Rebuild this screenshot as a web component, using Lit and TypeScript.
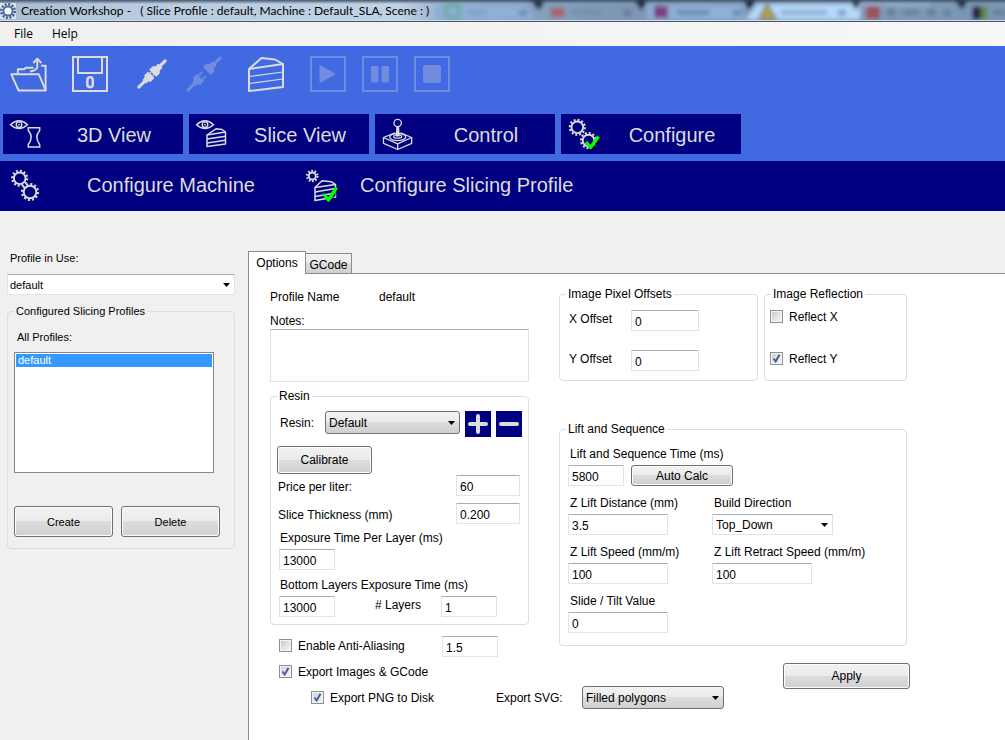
import { LitElement, html, css, svg } from "lit";
import { customElement, state } from "lit/decorators.js";

const INK = "#dcdcdc";

/** A toothed ring centred on (x, y) with outer radius r. */
const gear = (x: number, y: number, r: number, teeth = 12) => {
  const mid = r - 1;
  const dash = (2 * Math.PI * mid) / (teeth * 2);
  return svg`
    <circle cx=${x} cy=${y} r=${r - 2.7} fill="none" stroke=${INK} stroke-width="1.9" />
    <circle cx=${x} cy=${y} r=${mid} fill="none" stroke=${INK} stroke-width="2.2"
      stroke-dasharray="${dash} ${dash}" />`;
};

const eye = svg`
  <path d="M7.5 10.7Q16 3 24.5 10.7Q16 18.2 7.5 10.7Z" fill="none" stroke=${INK} stroke-width="1.4" />
  <circle cx="16" cy="10.7" r="2.8" fill="none" stroke=${INK} stroke-width="1.4" />
  <circle cx="16" cy="10.7" r="0.9" fill=${INK} />`;

const tick = (points: string) => svg`
  <polyline points=${points} transform="translate(1.5 1.5)" fill="none" stroke="#000" stroke-opacity=".5" stroke-width="3" />
  <polyline points=${points} fill="none" stroke="#00ff00" stroke-width="3.4" stroke-linejoin="round" />`;

const icons = {
  open: svg`<g fill="none" stroke=${INK} stroke-width="1.9" stroke-linejoin="round">
    <path d="M1.3 18.3H28.8L35.8 34.5H8.6Z" />
    <path d="M7.8 17.5V13.3H14L15.5 11.8H23.500" />
    <path d="M31 9.7H35.6V34" />
    <path d="M27.3 3V11Q26.5 14.5 20 15.5" />
    <path d="M23.3 7L27.3 2.6L31.3 7" />
  </g>`,
  save: svg`<g fill="none" stroke=${INK} stroke-width="2">
    <path d="M1 1H35V35H1Z" />
    <path d="M6 1V17H30V1" />
    <rect x="15.4" y="21.2" width="5.400" height="10" rx="2.600" stroke-width="2.500" />
  </g>`,
  connect: svg`<g transform="translate(18 18) rotate(-45)" fill=${INK}>
    <rect x="-20" y="-1.5" width="40" height="3" rx="1" />
    <path d="M-11 -2.5L-7 -3V-4.5H-1V4.5H-7V3L-11 2.5Z" />
    <path d="M1 -5H6L8 -3H12V3H8L6 5H1Z" />
    <rect x="-.8" y="-3.6" width="1.6" height="7.2" fill="#4169e1" />
    <rect x="-1" y="-2.6" width="2" height="1.2" /><rect x="-1" y="1.4" width="2" height="1.2" />
  </g>`,
  disconnect: svg`<g transform="translate(18 18) rotate(-45)" fill=${INK}>
    <rect x="-24" y="-1.5" width="14" height="3" rx="1" />
    <path d="M-14 -2.5L-11 -3V-5H-5V5H-11V3L-14 2.5Z" />
    <rect x="-5" y="-3.6" width="5" height="1.6" /><rect x="-5" y="2" width="5" height="1.6" />
    <path d="M4 -5.5H9L11 -3H15V3H11L9 5.5H4Z" />
    <rect x="14" y="-1.5" width="10" height="3" rx="1" />
  </g>`,
  slice: svg`<g fill="none" stroke=${INK} stroke-linejoin="round">
    <path d="M1 13L35 8V31L1 35Z" stroke-width="2" />
    <path d="M1 13L13.5 2L27 3.5L35 8" stroke-width="2" />
    <path d="M1 20.5L35 16M1 27.5L35 23" stroke-width="1.1" />
  </g>`,
  play: svg`<rect x="1" y="1" width="34" height="34" fill="none" stroke=${INK} stroke-width="2" />
    <path d="M9.5 10.5Q9.5 9 11 9.5L24.5 17Q26 18 24.5 19L11 26.5Q9.5 27 9.5 25.5Z" fill=${INK} />`,
  pause: svg`<rect x="1" y="1" width="34" height="34" fill="none" stroke=${INK} stroke-width="2" />
    <rect x="9" y="10" width="7.5" height="16.5" rx="1" fill=${INK} /><rect x="19.5" y="10" width="7.5" height="16.5" rx="1" fill=${INK} />`,
  stop: svg`<rect x="1" y="1" width="34" height="34" fill="none" stroke=${INK} stroke-width="2" />
    <rect x="9" y="9" width="18" height="18" rx="2.5" fill=${INK} />`,
  view3d: svg`${eye}
    <path d="M25.3 13.7H36.7V16.5Q31 23 36.7 30.5V33H25.3V30.5Q31 23 25.3 16.5Z" fill="none" stroke=${INK} stroke-width="1.5" />`,
  viewSlice: svg`${eye}
    <g fill="none" stroke=${INK} stroke-width="1.5" stroke-linejoin="round">
      <path d="M18 21L36.5 18V30L18 32.5Z" /><path d="M18 21L27 14.8L33 15.500L36.5 18" />
      <path d="M18 25L36.5 22.3M18 29L36.5 26.2" />
    </g>`,
  joystick: svg`<g fill="none" stroke=${INK} stroke-width="1.3" stroke-linejoin="round">
      <circle cx="22.7" cy="9" r="3.7" />
      <path d="M20 18.8L8.5 23.5L22.7 29.8L36.7 23.5L25.5 18.8" />
      <path d="M8.5 23.5V29.3L22.7 35.5L36.7 29.3V23.5M22.7 29.8V35.5" />
      <ellipse cx="22.7" cy="23" rx="8" ry="3.6" /><ellipse cx="22.7" cy="22.5" rx="4" ry="1.7" />
    </g>
    <path d="M21.3 13H24.1L24.7 22.5H20.7Z" fill=${INK} />`,
  configure: svg`${gear(16.3, 13.3, 8.5)}${gear(27.5, 26.5, 8.5)}${tick("25,28 29.5,33.5 37.5,22.5")}`,
  machine: svg`${gear(16.7, 12.3, 8.5)}${gear(27, 26, 9)}`,
  profile: svg`${gear(11.3, 10, 6.2, 10)}
    <g fill="none" stroke=${INK} stroke-width="1.5" stroke-linejoin="round">
      <path d="M14 21.500L34.5 18.5V31L14 34.5Z" /><path d="M14 21.500L21 14.8L30.500 15.800L34.5 18.5" />
      <path d="M14 26L34.5 22.5M14 30.5L34.5 27" />
    </g>${tick("22.5,28 27.5,34 35.5,21.5")}`,
};

@customElement("app-root")
export class AppRoot extends LitElement {
  @state() private tab = "Options";

  static styles = css`
    :host {
      display: flex;
      flex-direction: column;
      min-height: 100vh;
      background: #f0f0f0;
      color: #000;
      font: 12px/16px "Liberation Sans", Arial, sans-serif;
      overflow: hidden;
    }
    * { box-sizing: border-box; }
    button, input, select, textarea { font: inherit; color: inherit; margin: 0; }
    label { white-space: nowrap; }

    .titlebar {
      position: relative;
      display: flex;
      align-items: center;
      gap: 5px;
      height: 22px;
      border-bottom: 1px solid #4a5264;
      box-shadow: inset 0 -1px #cfdcea;
      background: linear-gradient(#46566b 0, #46566b00 4px),
        linear-gradient(90deg, #a9bccd, #b9cade 120px, #c0d2e6 400px, #8ea9c6 450px, #7d98b5 620px, #7b96b3);
      font: 12px/20px Lato, "Open Sans", sans-serif;
      white-space: pre;
      overflow: hidden;
    }
    .ghosts { position: absolute; left: 435px; top: 0; width: 570px; height: 20px; }
    .appicon { width: 16px; height: 16px; }
    .title { position: relative; }

    .menu {
      display: flex;
      align-items: center;
      height: 24px;
      padding: 0 4px;
      background: linear-gradient(90deg, #f0f0f0, #f7f7f7);
    }
    .menu button {
      border: 0;
      background: none;
      padding: 0 9px 0 10px;
      font: 12px/20px "Open Sans", "Noto Sans", sans-serif;
    }

    .ribbon { background: #4169e1; padding-bottom: 7px; }
    .tools { display: flex; gap: 16px; padding: 10px 10px 22px; }
    .tools button {
      width: 36px;
      height: 36px;
      padding: 0;
      border: 0;
      background: none;
    }
    .tools .apart { margin-left: 10px; }
    .tools button:disabled { opacity: 0.3; }
    .tools svg { display: block; width: 36px; height: 36px; overflow: visible; }

    .views { display: flex; gap: 6px; padding: 0 3px; }
    .views button {
      display: flex;
      align-items: center;
      width: 180px;
      height: 40px;
      padding: 0;
      border: 0;
      background: #000080;
      color: #dcdcdc;
      font-size: 20px;
      line-height: 24px;
    }
    .views svg, .sub svg { width: 40px; height: 40px; flex: none; }
    .views span { flex: 1; padding: 2px 0 0 2px; text-align: center; }

    .sub { display: flex; height: 50px; padding: 0 3px; background: #000080; }
    .sub button {
      display: flex;
      align-items: center;
      gap: 19px;
      padding: 0;
      border: 0;
      background: none;
      color: #dcdcdc;
      font-size: 20px;
      line-height: 24px;
    }
    .sub .first { width: 298px; gap: 44px; }
    .sub span { padding-bottom: 2px; }

    main { display: flex; flex: 1; padding-top: 39px; }

    .side {
      flex: none;
      width: 248px;
      padding: 0 13px 20px 7px;
      font-size: 11px;
    }
    .side .caption { display: block; padding-left: 3px; }
    .side .flat { width: 100%; height: 21px; margin: 8px 0; padding: 0 20px 0 2px; }
    .side fieldset { padding: 0 13px 11px 6px; }
    .side fieldset .caption { margin: 10px 0 7px; }
    .list {
      display: block;
      width: 200px;
      height: 121px;
      padding: 1px;
      border: 1px solid #828790;
      border-radius: 0;
      background: #fff;
      outline: 0;
      overflow: hidden;
    }
    .list option { height: 13px; min-height: 13px; padding: 0 2px; line-height: 13px; }
    .list option:checked { background-image: linear-gradient(#3399ff, #3399ff); -webkit-text-fill-color: #fff; }
    .pair { display: flex; gap: 8px; margin-top: 33px; }
    .pair .btn { width: 99px; height: 31px; }

    fieldset {
      min-width: 0;
      margin: 0;
      padding: 0 6px;
      border: 1px solid #d5dfe5;
      border-radius: 4px;
    }
    legend { padding: 0 2px; white-space: nowrap; }

    .btn {
      padding: 0;
      border: 1px solid #707070;
      border-radius: 3px;
      background: linear-gradient(#f2f2f2, #ebebeb 49%, #dddddd 50%, #cfcfcf);
      box-shadow: inset 0 0 0 1px #fcfcfc;
    }
    .box, .area {
      height: 21px;
      padding: 2px 3px 0;
      border: 1px solid #e2e3ea;
      border-top-color: #abadb3;
      border-radius: 1px;
      background: #fff;
      outline: 0;
    }
    .w56 { width: 56px; }
    .w64 { width: 64px; }
    .w68 { width: 68px; }
    .w100 { width: 100px; }

    select.drop, select.flat {
      appearance: none;
      height: 23px;
      padding: 0 20px 0 3px;
      border: 1px solid #707070;
      border-radius: 3px;
      background: url("data:image/svg+xml,%3Csvg xmlns='http://www.w3.org/2000/svg' width='7' height='4'%3E%3Cpath d='M0 0H7L3.5 4Z'/%3E%3C/svg%3E") right 4px center / 7px 4px no-repeat,
        linear-gradient(#f2f2f2, #ebebeb 49%, #dddddd 50%, #cfcfcf);
      outline: 0;
    }
    select.flat {
      border: 1px solid #e2e3ea;
      border-top-color: #abadb3;
      border-radius: 1px;
      background: url("data:image/svg+xml,%3Csvg xmlns='http://www.w3.org/2000/svg' width='7' height='4'%3E%3Cpath d='M0 0H7L3.5 4Z'/%3E%3C/svg%3E") right 4px center / 7px 4px no-repeat, #fff;
    }

    .check { display: flex; align-items: center; gap: 6px; height: 16px; }
    .check input {
      appearance: none;
      flex: none;
      width: 13px;
      height: 13px;
      margin-bottom: 2px;
      border: 1px solid #8e8f8f;
      background: linear-gradient(135deg, #c9ccd0, #f6f6f6) center / 9px 9px no-repeat #f4f4f4;
    }
    .check input:checked {
      background: url("data:image/svg+xml,%3Csvg xmlns='http://www.w3.org/2000/svg' width='11' height='11'%3E%3Cpath d='M2.5 5.5L4.7 8.5L8.5 1.8' fill='none' stroke='%234a5f97' stroke-width='2'/%3E%3C/svg%3E") center no-repeat,
        linear-gradient(135deg, #d0d3d8, #f6f6f6) center / 9px 9px no-repeat #f4f4f4;
    }

    .work { flex: 1; display: flex; flex-direction: column; min-width: 0; padding-top: 1px; }
    .tabs { display: flex; align-items: flex-end; margin-bottom: -1px; }
    .tabs button {
      width: 47px;
      height: 21px;
      margin-left: -1px;
      padding: 2px 0 0;
      border: 1px solid #898c95;
      background: linear-gradient(#f2f2f2, #ebebeb 49%, #dddddd 50%, #cfcfcf);
    }
    .tabs .on {
      position: relative;
      width: 58px;
      height: 23px;
      margin: 0;
      padding: 0 0 1px;
      border-bottom: 0;
      background: #fff;
    }
    .page {
      flex: 1;
      display: grid;
      grid-template-columns: 259px 348px;
      gap: 30px;
      align-items: start;
      padding: 12px 0 0 21px;
      border: 1px solid #898c95;
      border-width: 1px 0 0 1px;
      background: #fff;
    }

    .name { display: flex; padding: 3px 0 8px; }
    .name span { width: 109px; }
    .notes { display: block; }
    .area { display: block; width: 100%; height: 53px; margin-bottom: 6px; resize: none; }
    .resin { padding-bottom: 7px; }
    .row { display: flex; }
    .pick { gap: 5px; margin: 7px 0 9px; }
    .pick label { width: 43px; padding-left: 3px; line-height: 24px; }
    .pick .drop { width: 135px; }
    .square { width: 26px; height: 26px; padding: 0; border: 0; background: #000080; }
    .square svg { display: block; }
    .calibrate { display: block; width: 95px; height: 28px; margin-bottom: 1px; }
    .line { justify-content: space-between; padding: 0 2px 0 1px; margin-bottom: 7px; }
    .line label { padding-top: 4px; }
    .field { display: flex; flex-direction: column; gap: 3px; align-items: flex-start; padding-left: 2px; }
    .field label { padding-left: 2px; }
    .resin .field label { padding-left: 1px; }
    .exposure { margin: -1px 0 7px; }
    .resin .field .count { width: 106px; padding: 1px 0 0 40px; }

    .after { padding: 11px 31px 0 9px; justify-content: space-between; }
    .after .check { margin-top: 2px; }
    .images { padding: 7px 0 6px 9px; }
    .output { display: flex; width: max-content; padding-left: 41px; }
    .output .check { width: 185px; margin-top: 4px; }
    .output > label:not(.check) { width: 86px; line-height: 24px; }
    .output .drop { width: 142px; }

    .top { display: grid; grid-template-columns: 199px 143px; gap: 6px; margin-bottom: 40px; }
    .offsets { padding-bottom: 9px; }
    .offsets .row { margin-top: 8px; align-items: center; }
    .offsets .row + .row { margin-top: 19px; }
    .offsets label { width: 65px; padding: 0 0 3px 3px; }
    .reflect { padding-left: 5px; }
    .reflect legend { margin-left: 1px; }
    .reflect .check { margin-top: 7px; }
    .reflect .check + .check { margin-top: 26px; }
    .lift { padding-bottom: 12px; }
    .grid { display: grid; grid-template-columns: 144px 1fr; grid-auto-rows: 40px; row-gap: 9px; margin-top: 9px; }
    .grid .wide { grid-column: 1 / -1; }
    .grid .row { gap: 7px; }
    .calc { width: 102px; height: 21px; }
    .build { width: 121px; }
    .apply { display: block; width: 127px; height: 26px; margin: 17px -3px 0 auto; }
  `;

  private field(id: string, label: string, value: string, width = "w100") {
    return html`<div class="field">
      <label for=${id}>${label}</label>
      <input class="box ${width}" id=${id} .value=${value} />
    </div>`;
  }

  private check(label: string, on: boolean) {
    return html`<label class="check"><input type="checkbox" .checked=${on} />${label}</label>`;
  }

  private tool(icon: unknown, label: string, cls = "", disabled = false) {
    return html`<button class=${cls} aria-label=${label} ?disabled=${disabled}>
      <svg viewBox="0 0 36 36">${icon}</svg>
    </button>`;
  }

  private view(icon: unknown, label: string) {
    return html`<button><svg viewBox="0 0 40 40">${icon}</svg><span>${label}</span></button>`;
  }

  private tabButton(name: string) {
    return html`<button class=${this.tab === name ? "on" : ""} @click=${() => (this.tab = name)}>${name}</button>`;
  }

  private renderHeader() {
    return html`
      <div class="titlebar">
        <svg class="ghosts" viewBox="0 0 570 20" aria-hidden="true">
          <defs><filter id="soft" x="-10%" y="-50%" width="120%" height="200%"><feGaussianBlur stdDeviation="2" /></filter></defs>
          <g filter="url(#soft)">
            <path d="M310 20L322 4H494L506 20Z" fill="#b5d8fb" />
            <path d="M-10 20V5H90L100 20Z" fill="#8fb0d6" />
            <path d="M212 20V5H306L310 20Z" fill="#8db0d8" />
            <path d="M97 0h12l-5 10zM200 0h12l-5 10zM309 0h12l-6 10zM415 0h12l-6 10zM520 0h12l-6 10z" fill="#182430" />
            <path d="M425 20V5H524V20Z" fill="#7f9ab6" />
            <rect x="11" y="6" width="13" height="11" fill="none" stroke="#5fa99a" stroke-width="3" />
            <rect x="116" y="8" width="13" height="9" fill="#a8646c" />
            <rect x="219" y="6" width="14" height="12" fill="#7c3c7c" />
            <path d="M325 18L332 5L340 18Z" fill="#b8a650" stroke="#8f8a52" stroke-width="3" />
            <rect x="431" y="6" width="14" height="13" fill="#9a4f5a" />
            <rect x="538" y="7" width="8" height="12" fill="#26233f" /><rect x="546" y="7" width="6" height="12" fill="#5c8a4a" />
            <g fill="#4b6582" opacity=".5">
              <rect x="32" y="10" width="20" height="5" opacity=".4" /><rect x="84" y="10" width="8" height="6" />
              <rect x="136" y="10" width="30" height="5" opacity=".5" /><rect x="188" y="10" width="8" height="6" />
              <rect x="242" y="10" width="32" height="5" /><rect x="298" y="10" width="8" height="6" />
              <rect x="346" y="10" width="46" height="5" opacity=".7" /><rect x="403" y="10" width="8" height="6" />
              <rect x="452" y="9" width="8" height="7" /><rect x="468" y="10" width="16" height="5" />
              <rect x="492" y="9" width="9" height="7" /><rect x="508" y="10" width="8" height="6" />
              <rect x="558" y="10" width="12" height="5" />
            </g>
          </g>
        </svg>
        <svg class="appicon" viewBox="0 0 16 16" aria-hidden="true">
          <rect width="16" height="16" fill="#d8e4f0" />
          <circle cx="8" cy="8" r="6.8" fill="none" stroke="#3f5f93" stroke-width="2.4" stroke-dasharray="2.1 1.46" />
          <circle cx="8" cy="8" r="4.6" fill="#fff" stroke="#4a6da3" stroke-width="2" />
        </svg>
        <span class="title">Creation Workshop -   ( Slice Profile : default, Machine : Default_SLA, Scene : )</span>
      </div>
      <nav class="menu"><button>File</button><button>Help</button></nav>
      <div class="ribbon">
        <div class="tools">
          ${this.tool(icons.open, "Open")}
          ${this.tool(icons.save, "Save", "apart")}
          ${this.tool(icons.connect, "Connect", "apart")}
          ${this.tool(icons.disconnect, "Disconnect", "", true)}
          ${this.tool(icons.slice, "Slice", "apart")}
          ${this.tool(icons.play, "Play", "apart", true)}
          ${this.tool(icons.pause, "Pause", "", true)}
          ${this.tool(icons.stop, "Stop", "", true)}
        </div>
        <div class="views">
          ${this.view(icons.view3d, "3D View")} ${this.view(icons.viewSlice, "Slice View")}
          ${this.view(icons.joystick, "Control")} ${this.view(icons.configure, "Configure")}
        </div>
      </div>
      <div class="sub">
        <button class="first"><svg viewBox="0 0 40 40">${icons.machine}</svg><span>Configure Machine</span></button>
        <button><svg viewBox="0 0 40 40">${icons.profile}</svg><span>Configure Slicing Profile</span></button>
      </div>`;
  }

  private renderSide() {
    return html`<section class="side">
      <label class="caption" for="inuse">Profile in Use:</label>
      <select class="flat" id="inuse"><option>default</option></select>
      <fieldset>
        <legend>Configured Slicing Profiles</legend>
        <label class="caption" for="all">All Profiles:</label>
        <select class="list" id="all" size="9"><option selected>default</option></select>
        <div class="pair"><button class="btn">Create</button><button class="btn">Delete</button></div>
      </fieldset>
    </section>`;
  }

  private renderLeft() {
    return html`<div>
      <div class="name"><span>Profile Name</span>default</div>
      <label class="notes" for="notes">Notes:</label>
      <textarea class="area" id="notes"></textarea>
      <fieldset class="resin">
        <legend>Resin</legend>
        <div class="row pick">
          <label for="resin">Resin:</label>
          <select class="drop" id="resin"><option>Default</option></select>
          <button class="square" aria-label="Add resin">
            <svg viewBox="0 0 26 26"><path d="M13 5V21M5 13H21" stroke="#dcdcdc" stroke-width="4" stroke-linecap="round" /></svg>
          </button>
          <button class="square" aria-label="Remove resin">
            <svg viewBox="0 0 26 26"><path d="M5 13H21" stroke="#dcdcdc" stroke-width="4" stroke-linecap="round" /></svg>
          </button>
        </div>
        <button class="btn calibrate">Calibrate</button>
        <div class="row line"><label for="price">Price per liter:</label><input class="box w64" id="price" value="60" /></div>
        <div class="row line"><label for="thick">Slice Thickness (mm)</label><input class="box w64" id="thick" value="0.200" /></div>
        <div class="exposure">${this.field("exposure", "Exposure Time Per Layer (ms)", "13000", "w56")}</div>
        <div class="field">
          <label for="bottom">Bottom Layers Exposure Time (ms)</label>
          <div class="row">
            <input class="box w56" id="bottom" value="13000" />
            <label class="count" for="layers"># Layers</label>
            <input class="box w56" id="layers" value="1" />
          </div>
        </div>
      </fieldset>
      <div class="row after">
        ${this.check("Enable Anti-Aliasing", false)}
        <input class="box w56" aria-label="Anti-aliasing value" value="1.5" />
      </div>
      <div class="images">${this.check("Export Images & GCode", true)}</div>
      <div class="output">
        ${this.check("Export PNG to Disk", true)}
        <label for="svg">Export SVG:</label>
        <select class="drop" id="svg"><option>Filled polygons</option></select>
      </div>
    </div>`;
  }

  private renderRight() {
    return html`<div>
      <div class="top">
        <fieldset class="offsets">
          <legend>Image Pixel Offsets</legend>
          <div class="row"><label for="xo">X Offset</label><input class="box w68" id="xo" value="0" /></div>
          <div class="row"><label for="yo">Y Offset</label><input class="box w68" id="yo" value="0" /></div>
        </fieldset>
        <fieldset class="reflect">
          <legend>Image Reflection</legend>
          ${this.check("Reflect X", false)} ${this.check("Reflect Y", true)}
        </fieldset>
      </div>
      <fieldset class="lift">
        <legend>Lift and Sequence</legend>
        <div class="grid">
          <div class="field wide">
            <label for="seq">Lift and Sequence Time (ms)</label>
            <div class="row"><input class="box w56" id="seq" value="5800" /><button class="btn calc">Auto Calc</button></div>
          </div>
          ${this.field("dist", "Z Lift Distance (mm)", "3.5")}
          <div class="field">
            <label for="build">Build Direction</label>
            <select class="flat build" id="build"><option>Top_Down</option></select>
          </div>
          ${this.field("speed", "Z Lift Speed (mm/m)", "100")}
          ${this.field("retract", "Z Lift Retract Speed (mm/m)", "100")}
          ${this.field("tilt", "Slide / Tilt Value", "0")}
        </div>
      </fieldset>
      <button class="btn apply">Apply</button>
    </div>`;
  }

  render() {
    return html`
      ${this.renderHeader()}
      <main>
        ${this.renderSide()}
        <section class="work">
          <div class="tabs">${this.tabButton("Options")}${this.tabButton("GCode")}</div>
          <div class="page">${this.renderLeft()}${this.renderRight()}</div>
        </section>
      </main>`;
  }
}
